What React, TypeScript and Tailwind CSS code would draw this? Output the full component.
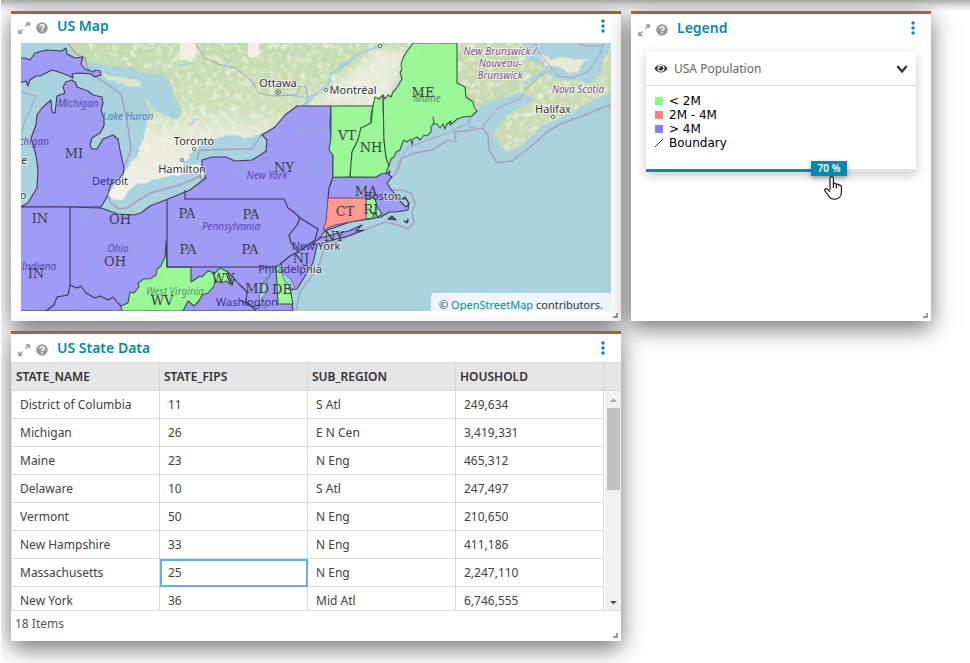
import React, { useState } from "react";

const BRAND = "text-[#068aa7]";
const PURPLE = "#9f9bf6";
const GREEN = "#9af896";
const RED = "#ff9995";

function ExpandIcon() {
  return (
    <svg viewBox="0 0 12 12" className="size-3" fill="none" stroke="#999" strokeWidth="1.4">
      <path d="M7.4 4.6 11 1M7.8 .9H11.2V4.2M4.6 7.4 1 11M.9 7.8V11.2H4.2" />
    </svg>
  );
}

function HelpIcon() {
  return (
    <svg viewBox="0 0 12 12" className="size-3">
      <circle cx="6" cy="6" r="5.8" fill="#999" />
      <path d="M4 4.7C4 3.3 5 2.8 6 2.8s2 .6 2 1.7C8 5.8 6.1 5.7 6.1 7.2" fill="none" stroke="#fff" strokeWidth="1.5" />
      <path d="M5.3 8.1h1.5v1.4H5.3z" fill="#fff" />
    </svg>
  );
}

function PanelHeader({ title, className }: { title: string; className: string }) {
  return (
    <header className={`flex items-center pl-[7px] pr-3 ${className}`}>
      <button aria-label={`Expand ${title}`} className="mt-1 size-3">
        <ExpandIcon />
      </button>
      <button aria-label={`Help for ${title}`} className="mt-1 ml-1.5 size-3">
        <HelpIcon />
      </button>
      <h2 className={`ml-[9px] flex-1 text-sm leading-5 font-semibold ${BRAND}`}>{title}</h2>
      <button aria-label={`${title} menu`} className="h-5 w-3">
        <svg viewBox="0 0 12 20" className="h-5 w-3" fill="#068aa7">
          <circle cx="6" cy="5" r="1.7" />
          <circle cx="6" cy="10" r="1.7" />
          <circle cx="6" cy="15" r="1.7" />
        </svg>
      </button>
    </header>
  );
}

function ResizeGrip() {
  return (
    <svg viewBox="0 0 5 5" className="absolute right-[3px] bottom-[3px] size-[5px]" fill="#999">
      <path d="M3 0H5V5H0V3H3Z" />
    </svg>
  );
}

function Panel({ children, className }: { children: React.ReactNode; className?: string }) {
  return (
    <section
      className={`relative min-w-0 border-t-3 border-[#a9603c] bg-white shadow-[0_7px_22px_rgba(0,0,0,0.56)] ${className ?? ""}`}
    >
      {children}
      <ResizeGrip />
    </section>
  );
}

type Label = [string, number, number];

const stateLabels: Label[] = [
  ["MI", 74, 158], ["IN", 40, 223], ["IN", 36, 278], ["OH", 120, 224], ["OH", 115, 266],
  ["PA", 187, 218], ["PA", 188, 254], ["PA", 251, 219], ["PA", 250, 254], ["NY", 284, 172],
  ["VT", 347, 140], ["NH", 371, 152], ["ME", 423, 97], ["MA", 366, 196], ["CT", 345, 216],
  ["RI", 371, 214], ["NY", 334, 241], ["NJ", 301, 263], ["DE", 282, 294], ["MD", 257, 293],
  ["WV", 162, 305], ["WV", 223, 283],
];

const regionLabels: Label[] = [
  ["Michigan", 78, 107], ["chigan", 34, 145], ["New York", 267, 179], ["Ohio", 118, 252],
  ["Indiana", 39, 270], ["Pennsylvania", 231, 230],
];

const cityLabels: Label[] = [
  ["Ottawa", 278, 87], ["Montréal", 353, 94], ["Toronto", 194, 145], ["Hamilton", 182, 173],
  ["Halifax", 553, 113],
];

// The first part of each name lies under the state layer, the rest outside it.
const coastalCities: { covered: string; open: string; x: number; y: number }[] = [
  { covered: "Detr", open: "oit", x: 110, y: 185 },
  { covered: "Bos", open: "ton", x: 383, y: 200 },
  { covered: "New ", open: "York", x: 316, y: 250 },
  { covered: "Philadelp", open: "hia", x: 290, y: 273 },
  { covered: "Washington", open: "", x: 247, y: 306 },
];

function UsMap() {
  return (
    <svg
      viewBox="21 43 590 268"
      role="img"
      aria-label="Map of the north-eastern United States"
      className="block w-full bg-[#aad3df]"
      fontFamily="'Noto Sans', sans-serif"
    >
      <defs>
        <linearGradient id="canada" x1="0" y1="0" x2="0" y2="1">
          <stop offset="0" stopColor="#c4dbae" />
          <stop offset=".42" stopColor="#cde0ba" />
          <stop offset=".62" stopColor="#ebebdc" />
          <stop offset="1" stopColor="#f3f0e8" />
        </linearGradient>
        <filter id="soft" x="-30%" y="-30%" width="160%" height="160%">
          <feGaussianBlur stdDeviation="5" />
        </filter>
        <filter id="coast" x="-5%" y="-5%" width="110%" height="110%">
          <feTurbulence type="fractalNoise" baseFrequency=".12" numOctaves="3" seed="5" />
          <feDisplacementMap in="SourceGraphic" scale="6" xChannelSelector="R" yChannelSelector="G" />
        </filter>
        <filter id="terrain" x="0" y="0" width="100%" height="100%">
          <feTurbulence type="fractalNoise" baseFrequency=".16" numOctaves="4" seed="8" />
          <feColorMatrix values="0 0 0 0 .95  0 0 0 0 .94  0 0 0 0 .88  0 3 0 0 -1.4" />
          <feComposite in2="SourceGraphic" operator="in" />
        </filter>
        <filter id="cover" x="0" y="0" width="100%" height="100%">
          <feTurbulence type="fractalNoise" baseFrequency=".05" numOctaves="3" seed="3" />
          <feColorMatrix values="0 0 0 0 .3  0 0 0 0 .42  0 0 0 0 .72  0 4 0 0 -2.3" />
          <feComposite in2="SourceGraphic" operator="in" />
        </filter>
        <filter id="forest" x="0" y="0" width="100%" height="100%">
          <feTurbulence type="fractalNoise" baseFrequency=".07" numOctaves="3" seed="6" />
          <feColorMatrix values="0 0 0 0 .35  0 0 0 0 .88  0 0 0 0 .35  0 4 0 0 -1.9" />
          <feComposite in2="SourceGraphic" operator="in" />
        </filter>
        <path id="ontario" d="M68 43 72 53 80 58 86 62 110 66 135 68 141 76 164 74 172 90 181 113 178 120 165 115 155 110 148 100 144 98 150 112 145 130 138 155 126 168 122 180 107 197 112 200 123 199 127 190 140 184 160 178 185 174 205 173 207 165 183 164 195 150 200 142 230 135 245 137 262 134 300 108 384 106 420 43Z" />
        <path id="brunswick" d="M457 43H523L526 55 532 60 548 67 543 70 530 78 522 92 505 97 485 102 475 111 457 84Z" />
        <path id="scotia" d="M520 94 528 84 545 73 560 81 575 80 590 83 601 74 603 62 611 45V93L600 96 575 110 560 118 540 126 530 138 516 149 507 153 500 144 494 138 495 130 505 118 518 108 535 101 534 96Z" />
        <path id="pei" d="M538 48 541 55 550 59 563 57 574 60 589 59 580 66 578 73 568 74 560 67 549 66 541 60Z" />
        <path id="vermont" d="M331 106H373L371 115 371 123 367 127 361 128 358 140 352 152 350 177H333V155L329 150 331 138Z" />
        <path id="hampshire" d="M373 106 375 97 379 99 383 95 384 140 386 157 389 165 386 173 381 174 376 177H350L352 152 358 140 361 128 371 123Z" />
        <path id="maine" d="M383 95 385 99 388 95 391 97 393 92 396 89 398 86 402 79 400 72 402 70 401 64 404 56 408 50 413 43H457L457 83 465 87 466 97 473 102 474 107 477 111 472 116 463 117 457 119 454 122 450 125 451 121 447 124 445 129 443 124 440 128 437 124 434 124 433 117 434 123 431 127 431 132 427 136 424 135 420 140 417 137 413 139 412 145 411 139 407 142 404 140 402 144 400 150 396 152 394 157 391 159 389 166 386 157 384 140Z" />
        <path id="wv" d="M166 241 167 267H191V282L200 276 202 277 208 271 215 273 220 268 228 272 232 285 226 281 221 283 215 280 214 286 208 293 202 295 199 301 194 306 188 301 183 311H122L121 306 128 303 130 292 134 293 139 287 138 283 144 279 150 279 156 275 157 269 161 266 165 257Z" />
      </defs>

      {/* Base map */}
      <rect x="21" y="43" width="590" height="268" fill="#aad3df" />
      <g filter="url(#coast)">
        <use href="#ontario" fill="url(#canada)" />
        <path d="M98 73 112 76 130 79 143 80 140 88 128 85 108 80Z" fill="#dde5cb" />
        <use href="#brunswick" fill="#c6daaf" />
        <use href="#scotia" fill="#c9dcb4" />
        <use href="#pei" fill="#e7ead7" />
        <path d="M138 73 164 74 172 90 181 113 168 114 152 106 143 92Z" fill="#aad3df" />
      </g>
      <path d="M300 106 384 106 408 50 375 50 345 78 320 96Z" fill="#f1eee4" opacity=".8" filter="url(#soft)" />
      <path d="M180 43H196V57H191V60H180ZM248 43H259V57H248Z" fill="#f2ece6" />
      <g opacity=".65" filter="url(#terrain)">
        <path d="M88 43 92 60 110 63 165 71 184 113 178 118 150 112 145 130 138 155 200 140 262 132 300 106 384 104 418 43Z" />
        <use href="#brunswick" />
        <use href="#scotia" />
      </g>
      <g fill="none" stroke="#a3cfe0" strokeWidth="1.4">
        <path d="M303 107 316 94 328 85 331 74 343 66 358 54 375 48 384 43" strokeWidth="2" />
        <path d="M180 65 193 63M150 88 162 92M190 125 197 118M278 92 290 95 305 98 316 94M222 68 232 60M262 82 270 76" />
      </g>
      <path d="M340 66 350 62" stroke="#a3cfe0" strokeWidth="4" />

      {/* Maritime and provincial boundaries */}
      <g fill="none" stroke="#a796b9" strokeWidth="1.5" opacity=".85">
        <path d="M68 43 75 53 85 58 88 70 98 78 121 94 127 120 131 150 124 168" />
        <path d="M197 160 200 150 252 149 262 134" />
        <path d="M195 43 205 58 218 64 235 68 249 79 253 82 258 93 272 96 297 95 300 86 306 87 308 100 300 108" strokeWidth="1" />
        <path d="M21 92 36 96 31 108 25 121 21 135" strokeWidth="1" />
        <path d="M389 190 403 190 412 194 415 205 412 212 414 222 408 229 398 225 385 222 370 228 352 235 325 246 319 265 308 281 300 292 296 311" />
        <path d="M389 180 397 172 402 158 415 153 432 150 448 140 456 142 454 132 464 131 483 128 488 135 489 150 497 163 512 161 534 144 547 132 560 124 580 117 604 107 611 105" />
        <path d="M395 174 398 163 408 148 425 141 445 134 457 128 466 125 474 112M482 127 499 107 520 99 527 88 545 72M535 43 540 54 558 76 572 78 588 72 600 54 604 43M578 43 585 46H602" strokeWidth="1" />
        <path d="M471 113 469 127 476 127" strokeWidth="1" />
      </g>

      {/* State areas */}
      <g stroke="#3d3a56" strokeWidth="1.1" strokeLinejoin="round" fill={PURPLE}>
        <path d="M20 58 25 58 30 60 35 53 46 50 62 51 66 48 67 54 75 58 83 57 81 64 85 69 94 72 95 70 100 71 101 75 95 77 91 74 80 73 72 74 73 78 69 76 62 73 52 70 40 76 36 76 30 80 28 86 26 81 20 83Z" />
        <path d="M63 87 66 82 72 80 76 83 77 87 88 91 93 95 102 97 103 103 101 110 104 118 104 126 100 133 92 138 90 145 92 149 97 149 103 139 113 135 118 139 120 150 124 168 123 174 117 181 111 184 107 197 101 207H20L28 203 37 188 38 170 36 155 31 138 36 125 37 115 42 108 51 100 52 112 55 113 57 96 65 93Z" />
        <path d="M20 207H70L101 208 118 214 134 215 141 213 150 206 168 199 190 190 206 178 202 168 202 160 212 157 226 157 235 161 252 160 262 154 266 151 267 140 262 135 275 127 285 115 297 106H331L330 125 333 155V177H376L381 174 382 170 387 174 390 171 389 175 392 177 387 183 390 188 394 193 401 202 406 207 409 204 406 199 402 199 405 197 409 203 408 210 396 212 389 212 381 217 370 219 350 222 325 231 318 240 316 250 313 263 305 276 297 289 290 290 293 311H20Z" />
        <path d="M312 244 320 238 335 234 349 231 362 225 356 231 364 230 348 236 333 240 320 244Z" />
        <path d="M388 219 392 216 396 220ZM404 221 408 222 408 219 407 223Z" fill="#615da3" />
      </g>
      <g filter="url(#cover)" opacity=".3">
        <path d="M70 208 100 208 130 216 168 199 206 178 266 150 285 115 329 106V176H380L392 205 300 280 190 311H70ZM21 58 66 52 100 72 60 73 21 80ZM40 110 70 82 101 98 104 120 90 140 113 137 124 168 101 207 38 205Z" />
      </g>
      <g stroke="#35523f" strokeWidth="1.1" strokeLinejoin="round" fill={GREEN}>
        <use href="#vermont" />
        <use href="#hampshire" />
        <use href="#maine" />
        <use href="#wv" />
        <path d="M276 267 281 264 284 276 290 288 293 304H278Z" />
        <path d="M366 198H375L377 207 382 214 378 217 374 212 373 218 365 219Z" />
      </g>
      <g filter="url(#forest)" opacity=".3">
        <use href="#vermont" />
        <use href="#hampshire" />
        <use href="#maine" />
        <use href="#wv" />
      </g>
      <path d="M328 198H366V219L350 222 335 225 323 230 326 222Z" fill={RED} stroke="#774b59" />
      <g fill="none" stroke="#38334f" strokeWidth="1.1" strokeLinejoin="round">
        <path d="M70 207V285L77 288 81 286 86 293 95 298 100 296 108 300 113 297 118 303 121 306M70 285 68 295 57 297 54 305 46 311M167 200V267H276M185 190V199H284L288 208 295 213 300 218 297 225 289 235 291 243 298 252 290 256 280 264M300 218 318 229 315 240 298 252M333 177 329 188 328 198M228 272 239 284 247 292 246 301 256 311M232 285 234 279M240 300 252 307 263 304" />
      </g>
      <path d="M107 190 110 202 119 209 127 208 150 193 180 185 205 174" fill="none" stroke="#a796b9" strokeWidth="1.5" opacity=".85" />
      <g fill="#a1cedf" stroke="#566785" strokeWidth=".8">
        <path d="M268 276 271 273 266 282 268 291 262 298 266 309 260 304 259 295 262 285ZM281 271 291 279 296 290 290 287 284 280Z" />
        <path d="M201 170 205 171 205 176 202 181 200 176Z" fill="#d7d2df" />
      </g>

      {/* Place names */}
      <g textAnchor="middle" fontSize="10" fontStyle="italic" fill="#5b46b4">
        {regionLabels.map(([t, x, y]) => (
          <text key={t} x={x} y={y}>{t}</text>
        ))}
        <text x="128" y="120" fill="#4f7fbb">Lake Huron</text>
        <text x="175" y="295" fill="#5c9872">West Virginia</text>
        <text x="427" y="102" fill="#519863">Maine</text>
        <g fill="#7c5486" stroke="#fff" strokeWidth="2" strokeOpacity=".6" paintOrder="stroke">
          <text x="500" y="55">New Brunswick /</text>
          <text x="500" y="67">Nouveau-</text>
          <text x="500" y="79">Brunswick</text>
          <text x="578" y="93">Nova Scotia</text>
        </g>
      </g>
      <g textAnchor="middle" fontSize="11" fill="#333" stroke="#fff" strokeWidth="2" strokeOpacity=".7" paintOrder="stroke">
        {cityLabels.map(([t, x, y]) => (
          <text key={t} x={x} y={y}>{t}</text>
        ))}
        <text x="24" y="164">e</text>
        <text x="23" y="199">o</text>
      </g>
      <g textAnchor="middle" fontSize="11" fill="#39318c">
        {coastalCities.map((city) => (
          <text key={city.covered} x={city.x} y={city.y}>
            {city.covered}
            <tspan fill="#333" stroke="#fff" strokeWidth="2" strokeOpacity=".5" paintOrder="stroke">{city.open}</tspan>
          </text>
        ))}
      </g>
      <g fill="#fff" stroke="#555" strokeWidth=".9">
        <circle cx="278" cy="92" r="2.4" />
        <circle cx="278" cy="92" r=".7" fill="#333" />
        <circle cx="326" cy="90" r="1.6" />
        <circle cx="380" cy="46" r="1.6" />
        <circle cx="194" cy="149" r="1.6" />
        <circle cx="182" cy="160" r="1.6" />
        <circle cx="553" cy="117" r="1.6" />
      </g>
      <g textAnchor="middle" fontFamily="'DejaVu Serif', serif" fontSize="13" fill="#3b3b46">
        {stateLabels.map(([t, x, y]) => (
          <text key={`${t}-${x}`} x={x} y={y}>{t}</text>
        ))}
      </g>
    </svg>
  );
}

const columns = ["STATE_NAME", "STATE_FIPS", "SUB_REGION", "HOUSHOLD"];
const rows = [
  ["District of Columbia", "11", "S Atl", "249,634"],
  ["Michigan", "26", "E N Cen", "3,419,331"],
  ["Maine", "23", "N Eng", "465,312"],
  ["Delaware", "10", "S Atl", "247,497"],
  ["Vermont", "50", "N Eng", "210,650"],
  ["New Hampshire", "33", "N Eng", "411,186"],
  ["Massachusetts", "25", "N Eng", "2,247,110"],
  ["New York", "36", "Mid Atl", "6,746,555"],
];

function StateTable() {
  return (
    <div className="flex h-[249px] overflow-hidden border border-r-0 border-[#d9d9d9]">
      <div className="min-w-0 flex-1">
        <table className="w-full table-fixed border-separate border-spacing-0 text-xs text-[#424242]">
          <thead>
            <tr>
              {columns.map((c) => (
                <th key={c} scope="col" className="h-7 border-r border-b border-[#d9d9d9] bg-[#e6e6e6] p-0 pl-1 text-left font-semibold text-[#333]">
                  {c}
                </th>
              ))}
            </tr>
          </thead>
          <tbody>
            {rows.map((row) => (
              <tr key={row[0]}>
                {row.map((cell) => (
                  <td
                    key={cell}
                    className={`h-7 border-r border-b border-[#d9d9d9] p-0 pl-2 ${
                      cell === "25" ? "outline-2 -outline-offset-2 outline-[#66afe9]" : ""
                    }`}
                  >
                    {cell}
                  </td>
                ))}
              </tr>
            ))}
          </tbody>
        </table>
      </div>
      <div className="flex w-[17px] flex-col">
        <div className="h-7 border-b border-[#d9d9d9] bg-[#e6e6e6]" />
        <div className="ml-px flex flex-1 flex-col items-center bg-[#f1f1f1]">
          <svg viewBox="0 0 15 17" className="h-[17px] w-[15px]" fill="#a3a3a3">
            <path d="M4 11 7.5 7.5 11 11Z" />
          </svg>
          <div className="h-[82px] w-[13px] bg-[#c1c1c1]" />
          <svg viewBox="0 0 15 17" className="mt-auto h-[17px] w-[15px]" fill="#505050">
            <path d="M4 8 7.5 11.5 11 8Z" />
          </svg>
        </div>
      </div>
    </div>
  );
}

const legendItems = [
  { label: "< 2M", fill: "#80ff80" },
  { label: "2M - 4M", fill: "#ff8080" },
  { label: "> 4M", fill: "#8080ff" },
  { label: "Boundary", fill: "" },
];

function LegendCard() {
  const [opacity, setOpacity] = useState(70);
  return (
    <div className="relative mx-[15px] h-30 shadow-[0_3px_10px_rgba(0,0,0,0.22)]">
      <div className="flex h-[34px] items-center border-b border-[#d9d9d9] pr-2 pl-2">
        <button aria-label="Toggle USA Population" className="h-3.5 w-3.5">
          <svg viewBox="0 0 14 14" className="size-3.5">
            <path d="M0.5 6.5C3.6 1.2 10.4 1.2 13.5 6.5 10.4 11.8 3.6 11.8 .5 6.5Z" fill="#333" />
            <circle cx="7" cy="6.2" r="3" fill="none" stroke="#fff" strokeWidth="1.1" />
            <path d="M5.4 6A1.7 1.7 0 0 1 7 4.6" fill="none" stroke="#fff" strokeWidth=".8" />
          </svg>
        </button>
        <span className="ml-1.5 flex-1 text-xs leading-4 text-[#666]">USA Population</span>
        <button aria-label="Collapse USA Population" className="h-3 w-3">
          <svg viewBox="0 0 12 12" className="size-3" fill="none" stroke="#333" strokeWidth="2.3">
            <path d="M1.3 3 6 8.4 10.7 3" />
          </svg>
        </button>
      </div>
      <ul className="px-[9px] pt-2 font-['DejaVu_Sans',sans-serif] text-xs leading-[14px] text-black">
        {legendItems.map((item) => (
          <li key={item.label} className="flex items-center gap-1.5">
            <svg viewBox="0 0 8 8" className="size-2">
              {item.fill ? <path d="M0 0H8V8H0Z" fill={item.fill} /> : <path d="M0 8 8 0" stroke="#333" />}
            </svg>
            {item.label}
          </li>
        ))}
      </ul>
      <div className="absolute inset-x-0 bottom-0 h-[3px] bg-[#e2e2e2]">
        <div className="h-full bg-[#068aa7]" style={{ width: `${opacity}%` }} />
        <input
          type="range"
          aria-label="Layer opacity"
          value={opacity}
          onChange={(e) => setOpacity(Number(e.target.value))}
          className="absolute inset-x-0 -top-2 h-5 w-full cursor-pointer opacity-0"
        />
        <output
          className="pointer-events-none absolute -top-2 w-9 -translate-x-6 bg-[#068aa7] text-center text-[10px] leading-[15px] font-semibold text-white shadow-[0_2px_5px_rgba(0,0,0,0.35)]"
          style={{ left: `${opacity}%` }}
        >
          {opacity} %
        </output>
        <svg viewBox="0 0 18 24" className="pointer-events-none absolute top-[7px] left-[66%] h-6 w-[18px]">
          <path
            d="M6 14V2.400a1.700 1.700 0 0 1 3.400 0V8.200c.5-1.200 2.700-1 2.900.4.8-.9 2.500-.5 2.700.7.9-.5 2.400 0 2.400 1.500V16c0 4.500-2.800 7.200-6.700 7.200-3.400 0-5.200-1.600-6.600-4.200L.8 14.600C.3 13.200 1.800 12.200 3.200 13L6 15.800M9.400 8.200V12M12.300 8.600V12.500"
            fill="#fff"
            stroke="#151a2c"
            strokeWidth="1.200"
            strokeLinejoin="round"
          />
        </svg>
      </div>
    </div>
  );
}

export default function App() {
  return (
    <div className="min-h-screen bg-white pl-px font-['Noto_Sans',sans-serif]">
      <main className="relative min-h-screen overflow-hidden">
        <div className="h-[11px] bg-linear-to-b from-[#acacac] via-[#dedede] to-[#fcfcfc]" />
        <div className="grid grid-cols-[minmax(0,610fr)_minmax(0,300fr)] items-start gap-2.5 pr-[39px] pb-[22px] pl-2.5">
          <Panel>
            <PanelHeader title="US Map" className="h-[29px] pb-1.5" />
            <div className="relative mx-2.5 pb-2.5">
              <UsMap />
              <div className="absolute right-0 bottom-2.5 h-[18px] overflow-hidden rounded-tl bg-white/80 px-2 pt-1">
                <p className="text-[11px] leading-4 text-[#333]">
                  © <a href="https://www.openstreetmap.org/copyright" className="text-[#068aa7]">OpenStreetMap</a> contributors.
                </p>
              </div>
            </div>
          </Panel>
          <Panel className="h-[310px]">
            <PanelHeader title="Legend" className="h-[38px] pb-2.5" />
            <LegendCard />
          </Panel>
          <Panel>
            <PanelHeader title="US State Data" className="h-7" />
            <StateTable />
            <p className="px-1 pt-0.5 pb-1.5 text-xs leading-[22px] text-[#555]">18 Items</p>
          </Panel>
        </div>
      </main>
    </div>
  );
}
